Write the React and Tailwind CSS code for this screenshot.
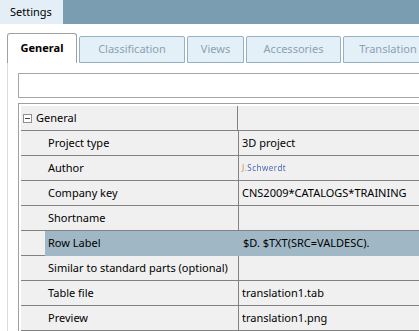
import React from "react";

const tabs = [
  { name: "Classification", w: "w-[106px]" },
  { name: "Views", w: "w-[57px]" },
  { name: "Accessories", w: "w-[95px]" },
  { name: "Translation", w: "w-[90px]" },
];

const props = [
  { label: "Project type", value: "3D project" },
  { label: "Author", value: "author", blurred: true },
  { label: "Company key", value: "CNS2009*CATALOGS*TRAINING" },
  { label: "Shortname", value: "" },
  { label: "Row Label", value: "$D. $TXT(SRC=VALDESC).", selected: true },
  { label: "Similar to standard parts (optional)", value: "" },
  { label: "Table file", value: "translation1.tab" },
  { label: "Preview", value: "translation1.png" },
];

const PropRow = ({ row }) => {
  return (
    <div className="flex h-[25px] border-b border-[#828282] bg-[#f0f0f0]">
      <div className="w-[24px] shrink-0" />
      <div className={`flex flex-1 ${row.selected ? "bg-[#a0b8c5] -mb-px" : ""}`}>
        <div
          className={`w-[194px] shrink-0 pl-[3px] flex items-center whitespace-nowrap ${
            row.selected ? "" : "border-r border-[#828282]"
          }`}
        >
          {row.label}
        </div>
        <div className={`flex-1 flex items-center whitespace-nowrap ${row.selected ? "pl-[4px]" : "pl-[3px]"}`}>
          {row.blurred ? (
            <span className="text-[8px] tracking-[0.5px] text-[#4a68b8] blur-[0.5px]">
              <span className="text-[#d08a3a]">J.</span>Schwerdt
            </span>
          ) : (
            row.value
          )}
        </div>
      </div>
    </div>
  );
};

const App = () => {
  return (
    <div className="w-[419px] h-[331px] overflow-hidden bg-white text-[11px] text-black font-['Noto_Sans','Liberation_Sans',sans-serif]">
      {/* Window title strip */}
      <div className="flex h-[24px] bg-[#7b9db2]">
        <div className="w-[63px] bg-[#e4eef6] pl-[10px] flex items-center">Settings</div>
      </div>

      {/* Tab strip */}
      <div className="flex items-end h-[39px] pl-[7px] gap-[2px]">
        <div className="w-[70px] h-[30px] shrink-0 border border-b-0 border-[#a0a0a0] rounded-t-[3px] bg-white flex items-center justify-center font-bold">
          General
        </div>
        {tabs.map((t) => (
          <div
            key={t.name}
            className={`${t.w} h-[27px] shrink-0 border border-[#98b1c2] rounded-t-[2px] bg-[#e4f0f8] text-[#8ba1b2] flex items-center justify-center`}
          >
            {t.name}
          </div>
        ))}
      </div>

      {/* Panel */}
      <div className="ml-[7px] border-l border-[#dadada] pl-[10px] pt-[10px] h-[268px]">
        <div className="h-[25px] border border-r-0 border-[#a5a5a5] bg-white" />
        <div className="mt-[5px] border-t border-l border-[#a0a0a0] pt-[2px] pl-[2px]">
          <div className="flex h-[25px] border-b border-[#828282] bg-[#f0f0f0]">
            <div className="w-[217px] shrink-0 border-r border-[#828282] flex items-center">
              <div className="ml-[2px] w-[9px] h-[9px] border border-[#909090] bg-white flex items-center justify-center">
                <div className="w-[5px] h-px bg-[#404040]" />
              </div>
              <span className="ml-[4px]">General</span>
            </div>
            <div className="flex-1" />
          </div>
          {props.map((row) => (
            <PropRow key={row.label} row={row} />
          ))}
        </div>
      </div>
    </div>
  );
};

export default App;
